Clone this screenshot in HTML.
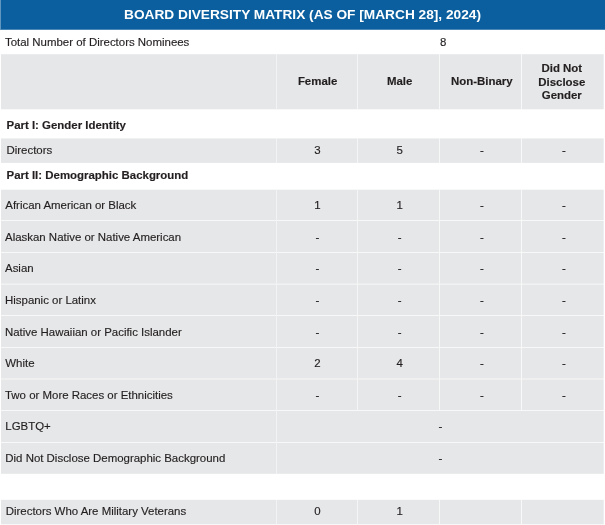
<!DOCTYPE html>
<html><head><meta charset="utf-8">
<style>
html,body{margin:0;padding:0;background:#fff;}
body{width:605px;height:525px;overflow:hidden;position:relative;font-family:"Liberation Sans",sans-serif;font-size:11.45px;color:#231f20;}
.g{position:absolute;}
#tx{position:absolute;left:0;top:0;width:605px;height:525px;will-change:transform;}
.t{position:absolute;white-space:nowrap;line-height:14px;-webkit-text-stroke:0.15px #231f20;}
.c{text-align:center;}
.b{font-weight:bold;}
#title{position:absolute;left:0;top:-0.8px;width:605px;height:30px;color:#fff;font-weight:bold;font-size:13.7px;text-align:center;line-height:31px;white-space:nowrap;}
</style></head><body>
<div class="g" style="left:0px;top:0px;width:605px;height:29px;background:#0b5f9e"></div>
<div class="g" style="left:0px;top:29px;width:605px;height:1px;background:#4887b6"></div>
<div class="g" style="left:0px;top:55px;width:605px;height:54px;background:#e6e7e8"></div>
<div class="g" style="left:0px;top:54px;width:605px;height:1px;background:#ebeced"></div>
<div class="g" style="left:0px;top:109px;width:605px;height:1px;background:#f8f8f8"></div>
<div class="g" style="left:0px;top:139px;width:605px;height:23px;background:#e6e7e8"></div>
<div class="g" style="left:0px;top:138px;width:605px;height:1px;background:#f0f1f1"></div>
<div class="g" style="left:0px;top:162px;width:605px;height:1px;background:#e8e9ea"></div>
<div class="g" style="left:0px;top:190px;width:605px;height:283px;background:#e6e7e8"></div>
<div class="g" style="left:0px;top:189px;width:605px;height:1px;background:#f7f8f8"></div>
<div class="g" style="left:0px;top:473px;width:605px;height:1px;background:#eaebeb"></div>
<div class="g" style="left:0px;top:500px;width:605px;height:25px;background:#e6e7e8"></div>
<div class="g" style="left:0px;top:499px;width:605px;height:1px;background:#fbfbfc"></div>
<div class="g" style="left:0px;top:220px;width:605px;height:1px;background:#f7f8f8"></div>
<div class="g" style="left:0px;top:252px;width:605px;height:1px;background:#f7f8f8"></div>
<div class="g" style="left:0px;top:283px;width:605px;height:1px;background:#ecedee"></div>
<div class="g" style="left:0px;top:284px;width:605px;height:1px;background:#f1f2f2"></div>
<div class="g" style="left:0px;top:315px;width:605px;height:1px;background:#f8f8f8"></div>
<div class="g" style="left:0px;top:347px;width:605px;height:1px;background:#f8f8f8"></div>
<div class="g" style="left:0px;top:378px;width:605px;height:1px;background:#efeff0"></div>
<div class="g" style="left:0px;top:379px;width:605px;height:1px;background:#efeff0"></div>
<div class="g" style="left:0px;top:410px;width:605px;height:1px;background:#f8f8f8"></div>
<div class="g" style="left:0px;top:442px;width:605px;height:1px;background:#f8f8f8"></div>
<div class="g" style="left:0px;top:524px;width:605px;height:1px;background:#f8f8f8"></div>
<div class="g" style="left:276px;top:54px;width:1px;height:56px;background:#f2f3f4"></div>
<div class="g" style="left:357px;top:54px;width:1px;height:56px;background:#f5f5f6"></div>
<div class="g" style="left:439px;top:54px;width:1px;height:56px;background:#f6f7f7"></div>
<div class="g" style="left:521px;top:54px;width:1px;height:56px;background:#f8f8f8"></div>
<div class="g" style="left:276px;top:138px;width:1px;height:25px;background:#f2f3f4"></div>
<div class="g" style="left:357px;top:138px;width:1px;height:25px;background:#f5f5f6"></div>
<div class="g" style="left:439px;top:138px;width:1px;height:25px;background:#f6f7f7"></div>
<div class="g" style="left:521px;top:138px;width:1px;height:25px;background:#f8f8f8"></div>
<div class="g" style="left:276px;top:189px;width:1px;height:222px;background:#f2f3f4"></div>
<div class="g" style="left:357px;top:189px;width:1px;height:222px;background:#f5f5f6"></div>
<div class="g" style="left:439px;top:189px;width:1px;height:222px;background:#f6f7f7"></div>
<div class="g" style="left:521px;top:189px;width:1px;height:222px;background:#f8f8f8"></div>
<div class="g" style="left:276px;top:410px;width:1px;height:64px;background:#f2f3f4"></div>
<div class="g" style="left:276px;top:500px;width:1px;height:25px;background:#f2f3f4"></div>
<div class="g" style="left:357px;top:500px;width:1px;height:25px;background:#f5f5f6"></div>
<div class="g" style="left:439px;top:500px;width:1px;height:25px;background:#f6f7f7"></div>
<div class="g" style="left:521px;top:500px;width:1px;height:25px;background:#f8f8f8"></div>
<div class="g" style="left:0px;top:0px;width:1px;height:30px;background:#6097c0"></div>
<div class="g" style="left:604px;top:30px;width:1px;height:495px;background:#ffffff"></div>
<div class="g" style="left:603px;top:30px;width:1px;height:495px;background:rgba(255,255,255,0.3)"></div>
<div class="g" style="left:0px;top:30px;width:1px;height:495px;background:#ffffff"></div>
<div id="tx">
<div id="title">BOARD DIVERSITY MATRIX (AS OF [MARCH 28], 2024)</div>
<div class="t " style="left:6.5px;width:269.5px;top:142.65px">Directors</div>
<div class="t c " style="left:277.4px;width:80px;top:142.65px">3</div>
<div class="t c " style="left:359.6px;width:80px;top:142.65px">5</div>
<div class="t c " style="left:441.8px;width:80px;top:142.65px">-</div>
<div class="t c " style="left:523.9px;width:80px;top:142.65px">-</div>
<div class="t " style="left:5.3px;width:270.7px;top:197.95px">African American or Black</div>
<div class="t c " style="left:277.4px;width:80px;top:197.95px">1</div>
<div class="t c " style="left:359.6px;width:80px;top:197.95px">1</div>
<div class="t c " style="left:441.8px;width:80px;top:197.95px">-</div>
<div class="t c " style="left:523.9px;width:80px;top:197.95px">-</div>
<div class="t " style="left:5px;width:271px;top:229.5px">Alaskan Native or Native American</div>
<div class="t c " style="left:277.4px;width:80px;top:229.5px">-</div>
<div class="t c " style="left:359.6px;width:80px;top:229.5px">-</div>
<div class="t c " style="left:441.8px;width:80px;top:229.5px">-</div>
<div class="t c " style="left:523.9px;width:80px;top:229.5px">-</div>
<div class="t " style="left:5px;width:271px;top:261.3px">Asian</div>
<div class="t c " style="left:277.4px;width:80px;top:261.3px">-</div>
<div class="t c " style="left:359.6px;width:80px;top:261.3px">-</div>
<div class="t c " style="left:441.8px;width:80px;top:261.3px">-</div>
<div class="t c " style="left:523.9px;width:80px;top:261.3px">-</div>
<div class="t " style="left:5px;width:271px;top:292.75px">Hispanic or Latinx</div>
<div class="t c " style="left:277.4px;width:80px;top:292.75px">-</div>
<div class="t c " style="left:359.6px;width:80px;top:292.75px">-</div>
<div class="t c " style="left:441.8px;width:80px;top:292.75px">-</div>
<div class="t c " style="left:523.9px;width:80px;top:292.75px">-</div>
<div class="t " style="left:5px;width:271px;top:324.95px">Native Hawaiian or Pacific Islander</div>
<div class="t c " style="left:277.4px;width:80px;top:324.95px">-</div>
<div class="t c " style="left:359.6px;width:80px;top:324.95px">-</div>
<div class="t c " style="left:441.8px;width:80px;top:324.95px">-</div>
<div class="t c " style="left:523.9px;width:80px;top:324.95px">-</div>
<div class="t " style="left:5.3px;width:270.7px;top:356.15px">White</div>
<div class="t c " style="left:277.4px;width:80px;top:356.15px">2</div>
<div class="t c " style="left:359.6px;width:80px;top:356.15px">4</div>
<div class="t c " style="left:441.8px;width:80px;top:356.15px">-</div>
<div class="t c " style="left:523.9px;width:80px;top:356.15px">-</div>
<div class="t " style="left:5px;width:271px;top:387.65px">Two or More Races or Ethnicities</div>
<div class="t c " style="left:277.4px;width:80px;top:387.65px">-</div>
<div class="t c " style="left:359.6px;width:80px;top:387.65px">-</div>
<div class="t c " style="left:441.8px;width:80px;top:387.65px">-</div>
<div class="t c " style="left:523.9px;width:80px;top:387.65px">-</div>
<div class="t " style="left:5.3px;width:270.7px;top:419.45px">LGBTQ+</div>
<div class="t c " style="left:400.5px;width:80px;top:419.45px">-</div>
<div class="t " style="left:5.3px;width:270.7px;top:451.325px">Did Not Disclose Demographic Background</div>
<div class="t c " style="left:400.5px;width:80px;top:451.325px">-</div>
<div class="t " style="left:5.7px;width:270.3px;top:503.925px">Directors Who Are Military Veterans</div>
<div class="t c " style="left:277.4px;width:80px;top:503.925px">0</div>
<div class="t c " style="left:359.6px;width:80px;top:503.925px">1</div>
<div class="t c b" style="left:277.6px;width:80px;top:73.6px">Female</div>
<div class="t c b" style="left:359.6px;width:80px;top:73.6px">Male</div>
<div class="t c b" style="left:441.8px;width:80px;top:73.6px">Non-Binary</div>
<div class="t c b" style="left:521.8px;width:80px;top:62.4px;line-height:13.5px">Did Not<br>Disclose<br>Gender</div>
<div class="t " style="left:5px;width:271px;top:35px">Total Number of Directors Nominees</div>
<div class="t c " style="left:403.3px;width:80px;top:35.2px">8</div>
<div class="t b" style="left:6.5px;width:269.5px;top:118px">Part I: Gender Identity</div>
<div class="t b" style="left:6.5px;width:269.5px;top:168px">Part II: Demographic Background</div>
</div>
</body></html>
